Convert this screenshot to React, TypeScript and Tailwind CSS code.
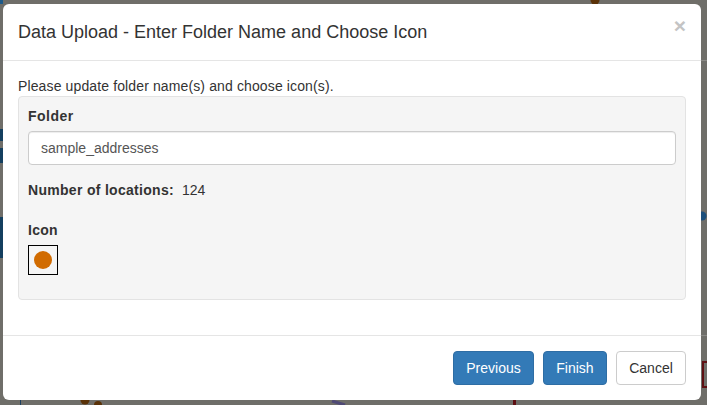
const font = "font-['Liberation_Sans',Arial,sans-serif]";

function DimmedMap() {
  return (
    <svg className="absolute inset-0" width="707" height="405" viewBox="0 0 707 405" aria-hidden="true">
      <rect x="0" y="0" width="3" height="4" fill="#1d5a8a" />
      <rect x="0" y="129" width="3" height="12" fill="#143f5f" />
      <rect x="0" y="148" width="3" height="15" fill="#143f5f" />
      <rect x="0" y="217" width="3" height="41" fill="#143f5f" />
      <circle cx="595" cy="0" r="4.5" fill="#5a3208" />
      <circle cx="702" cy="216" r="4.5" fill="#1c4f7c" />
      <path d="M701 60.5H707M701 335.5H707" stroke="#8a8985" />
      <path d="M707 362H703V387H707" fill="none" stroke="#5e0f12" strokeWidth="2" />
      <path d="M20.5 400V405" stroke="#1c3f5f" />
      <circle cx="85" cy="400" r="4.5" fill="#5a3208" />
      <circle cx="98" cy="405" r="4" fill="#5a3208" />
      <path d="M332 401L345 405" stroke="#4f4a75" strokeWidth="3" />
      <rect x="513" y="400" width="3" height="5" fill="#5e0f12" />
    </svg>
  );
}

export default function App() {
  return (
    <div className={`${font} relative h-[405px] w-[707px] overflow-hidden bg-[#6f6e69] pl-[3px] pt-[4px] text-[14px] leading-[20px] text-[#333333]`}>
      <DimmedMap />
      <div className="relative flex h-[396px] w-[698px] flex-col rounded-[6px] bg-white">
        <div className="flex h-[57px] shrink-0 items-start justify-between border-b border-[#e5e5e5] px-[15px] pt-[16px]">
          <h4 className="text-[18px] leading-[25px]">Data Upload - Enter Folder Name and Choose Icon</h4>
          <span className="mt-[-5px] text-[21px] font-bold leading-[21px] text-[#c4c4c4]">×</span>
        </div>
        <div className="flex h-[274px] shrink-0 flex-col px-[15px] pt-[15px]">
          <p className="h-[20px] tracking-[0.125px]">Please update folder name(s) and choose icon(s).</p>
          <div className="h-[204px] rounded-[4px] border border-[#e3e3e3] bg-[#f5f5f5] px-[9px] pt-[9px]">
            <div className="font-bold leading-[20px] tracking-[0.5px]">Folder</div>
            <input
              readOnly
              value="sample_addresses"
              className="mt-[5px] block h-[34px] w-full rounded-[4px] border border-[#cccccc] bg-white px-[12px] text-[14px] text-[#555555] shadow-[inset_0_1px_1px_rgba(0,0,0,0.075)] outline-none"
            />
            <div className="mt-[15px] flex">
              <span className="font-bold tracking-[0.3px]">Number of locations:</span>
              <span className="ml-[8px]">124</span>
            </div>
            <div className="mt-[20px] font-bold tracking-[0.25px]">Icon</div>
            <div className="mt-[5px] flex h-[30px] w-[30px] items-center justify-center border border-black">
              <div className="h-[18px] w-[18px] rounded-full bg-[#d16b00]" />
            </div>
          </div>
        </div>
        <div className="flex grow items-start justify-end gap-[9px] border-t border-[#e5e5e5] pr-[15px] pt-[15px]">
          <button className="h-[34px] w-[81px] rounded-[4px] border border-[#2e6da4] bg-[#337ab7] text-white">Previous</button>
          <button className="h-[34px] w-[64px] rounded-[4px] border border-[#2e6da4] bg-[#337ab7] text-white">Finish</button>
          <button className="h-[34px] w-[70px] rounded-[4px] border border-[#cccccc] bg-white text-[#333333]">Cancel</button>
        </div>
      </div>
    </div>
  );
}
